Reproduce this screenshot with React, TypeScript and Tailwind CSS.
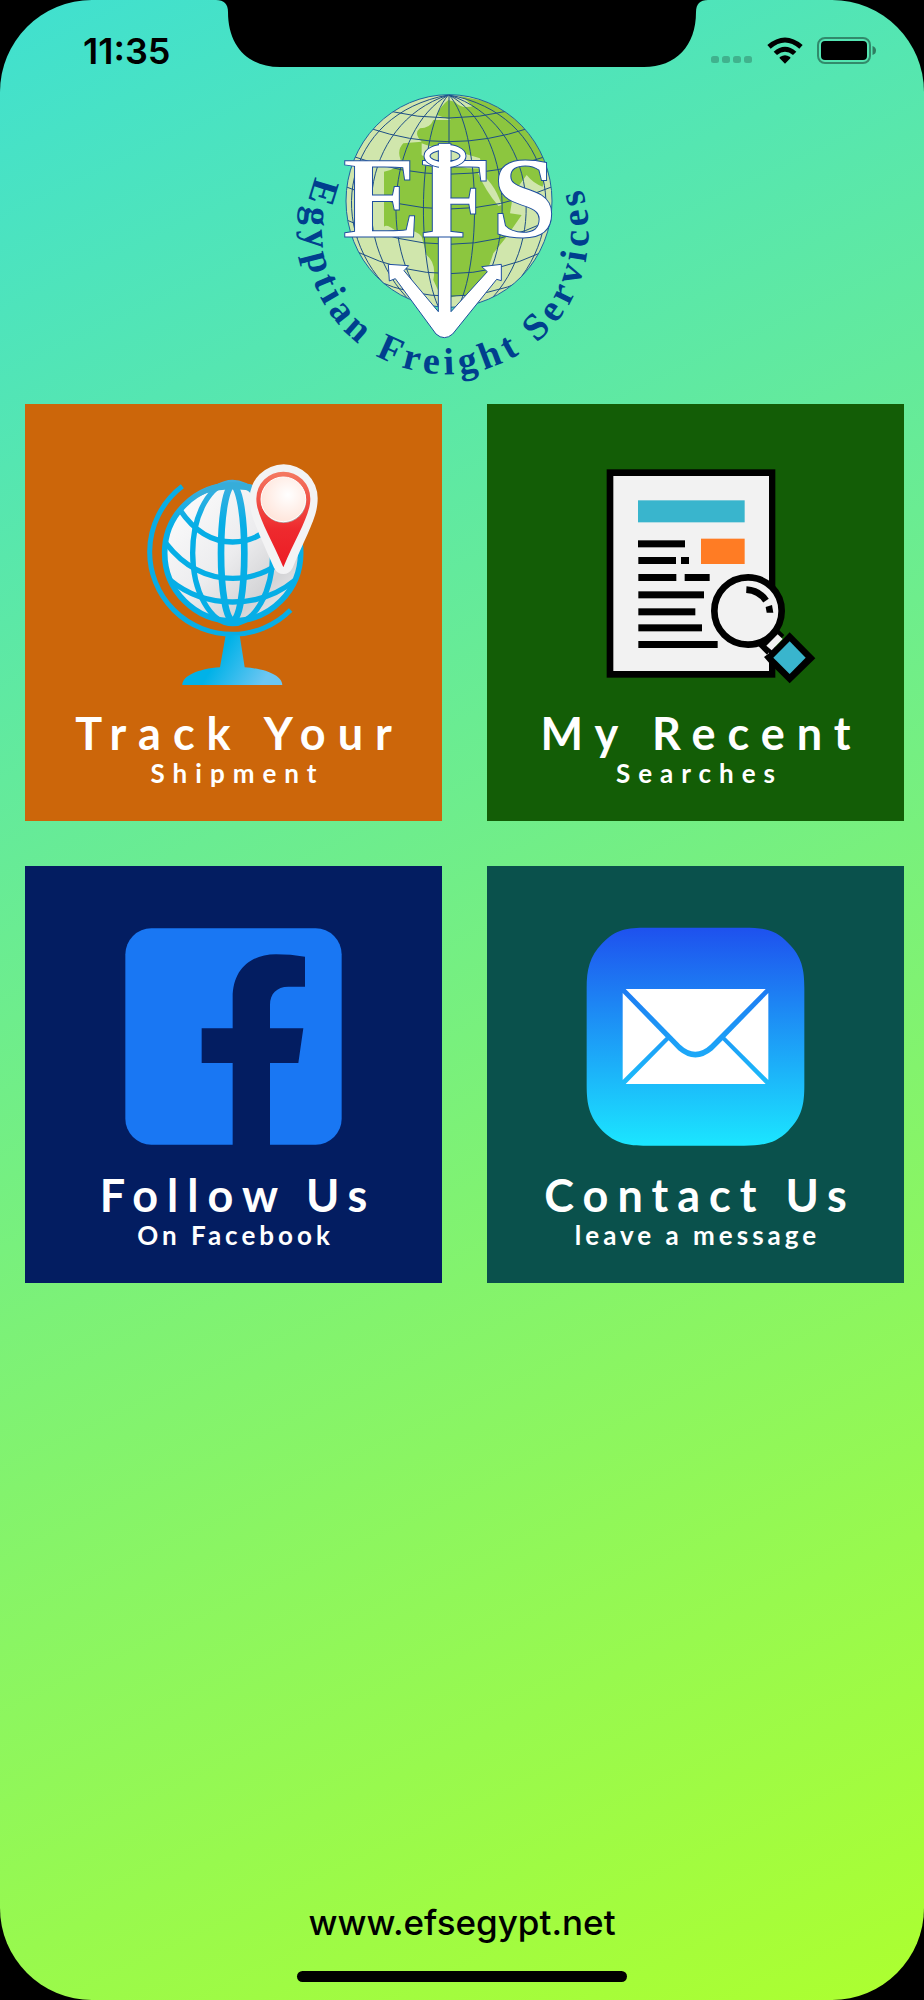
import React from "react";

function Notch() {
  return (
    <svg
      className="absolute top-0 left-1/2 h-[68px] w-[492px] -translate-x-1/2"
      viewBox="0 0 492 68"
      aria-hidden="true"
    >
      <path d="M0 0C8 0 12 4 12 12C12 46 32 67 64 67H428C460 67 480 46 480 12C480 4 484 0 492 0Z" fill="#000" />
    </svg>
  );
}

function StatusIcons() {
  return (
    <div className="flex items-end gap-[14px]">
      <svg className="h-[27px] w-[42px]" viewBox="0 0 42 27" aria-hidden="true">
        {[0, 11, 22, 33].map((x) => (
          <rect key={x} x={x} y="19" width="8" height="7" rx="2.5" fill="#000" opacity="0.22" />
        ))}
      </svg>
      <svg className="h-[27px] w-[36px]" viewBox="0 0 108 81" aria-hidden="true">
        <path d="M54 80L38 64Q36 61 40 59Q54 50 68 59Q72 61 70 64Z" />
        <path d="M20 44Q54 15 88 44L78 54Q54 34 30 54Z" />
        <path d="M1 24Q54 -21 107 24L97 35Q54 -2 11 35Z" />
      </svg>
      <svg className="h-[27px] w-[60px]" viewBox="0 0 60 27" aria-hidden="true">
        <rect x="1" y="1" width="52" height="25" rx="7" fill="none" stroke="#000" strokeOpacity="0.4" strokeWidth="2" />
        <rect x="4" y="4" width="46" height="19" rx="4" />
        <path d="M55.500 9Q59 10 59 13.500Q59 17 55.500 18Z" opacity="0.45" />
      </svg>
    </div>
  );
}

function Logo() {
  return (
    <svg className="w-[320px]" viewBox="0 0 960 930" role="img" aria-label="Egyptian Freight Services">
      <defs>
        <clipPath id="earth">
          <ellipse cx="507" cy="363" rx="309" ry="319" />
        </clipPath>
        <path id="ring" d="M108 290A426 426 0 0 0 500 883A426 426 0 0 0 892 290" />
      </defs>
      <ellipse cx="507" cy="363" rx="309" ry="319" fill="#d0e6ac" />
      <g clipPath="url(#earth)">
        <path
          d="M505 60Q540 70 575 80Q560 50 520 44L700 80L810 200L817 290Q800 250 788 320Q760 310 740 285L700 340L690 400L725 405L680 470L640 520L620 580L575 650Q520 640 490 665L460 600Q470 550 440 525L425 470Q400 440 350 455Q320 430 312 440V275Q350 270 362 240Q350 210 370 190L425 185Q400 160 420 145Q450 145 460 120H514Q490 112 470 105Q480 80 505 60Z"
          fill="#8cc63f"
        />
        <path d="M425 190Q460 205 500 205L600 235L605 265Q540 270 520 245Q470 260 425 225Z" fill="#d0e6ac" />
        <path d="M592 275Q640 300 665 375L655 378Q615 330 592 275Z" fill="#d0e6ac" />
        <path d="M500 45Q560 60 578 78Q545 88 525 66Z" fill="#d0e6ac" />
        <g fill="none" stroke="#1d4e86" strokeWidth="3">
          <path d="M507 44V690" />
          <path d="M505 45C410 150 410 560 480 690" />
          <path d="M505 45C320 150 290 530 460 690" />
          <path d="M505 45C240 130 190 500 420 690" />
          <path d="M505 45C190 100 120 450 350 650" />
          <path d="M507 45C605 150 605 560 530 690" />
          <path d="M507 45C700 150 720 530 555 690" />
          <path d="M507 45C770 130 820 500 600 690" />
          <path d="M507 45C820 100 890 450 670 650" />
          <path d="M320 92Q507 136 690 92" />
          <path d="M270 145Q507 225 745 145" />
          <path d="M222 230Q507 335 795 230" />
          <path d="M197 320Q507 454 817 320" />
          <path d="M200 420Q507 566 812 420" />
          <path d="M230 515Q507 647 790 515" />
          <path d="M285 600Q507 697 740 600" />
        </g>
      </g>
      <ellipse cx="507" cy="363" rx="309" ry="319" fill="none" stroke="#1d64a0" strokeWidth="3" />
      <path
        d="M475 190H513V695L622 575L605 560L664 553V602L650 598L518 762Q493 784 468 762L346 596L328 603L325 553L386 557L372 572L475 695Z"
        fill="#fff"
        stroke="#1d4e9e"
        strokeWidth="3"
      />
      <text
        x="188"
        y="472"
        fontSize="350"
        fill="#fff"
        stroke="#1d4e9e"
        strokeWidth="3"
        className="font-['Liberation_Serif',serif] font-bold"
      >
        EFS
      </text>
      <ellipse cx="495" cy="228" rx="54" ry="26" fill="none" stroke="#1d4e9e" strokeWidth="21" />
      <ellipse cx="495" cy="228" rx="54" ry="26" fill="none" stroke="#fff" strokeWidth="15" />
      <path d="M477 192H511V466H477Z" fill="#fff" />
      <text
        fontSize="114"
        fill="#003f8e"
        className="font-['Liberation_Serif',serif] font-bold tracking-[16px]"
      >
        <textPath href="#ring">Egyptian Freight Services</textPath>
      </text>
    </svg>
  );
}

function GlobeIcon() {
  return (
    <svg className="w-full" viewBox="15 12 1251 909" aria-hidden="true">
      <defs>
        <linearGradient id="globeBody" x1="0" y1="0" x2="1" y2="1">
          <stop offset="0" stopColor="#fff" />
          <stop offset="0.500" stopColor="#ececee" />
          <stop offset="0.750" stopColor="#d4d4d6" />
          <stop offset="1" stopColor="#f6f6f6" />
        </linearGradient>
        <linearGradient id="globeEdge" x1="0" y1="247" x2="0" y2="670" gradientUnits="userSpaceOnUse">
          <stop offset="0" stopColor="#3fafdf" />
          <stop offset="0.300" stopColor="#06aee6" />
          <stop offset="1" stopColor="#06aee6" />
        </linearGradient>
        <linearGradient id="globeStand" x1="0" y1="0" x2="1" y2="0.300">
          <stop offset="0.450" stopColor="#00b2e8" />
          <stop offset="1" stopColor="#6cc6f2" />
        </linearGradient>
        <linearGradient id="pinRed" x1="0" y1="0" x2="0" y2="1">
          <stop offset="0" stopColor="#f47a62" />
          <stop offset="0.600" stopColor="#ee2a2e" />
          <stop offset="1" stopColor="#ec1c24" />
        </linearGradient>
        <radialGradient id="pinFace" cx="0.600" cy="0.400" r="0.600">
          <stop offset="0" stopColor="#fff" />
          <stop offset="1" stopColor="#ffe6dc" />
        </radialGradient>
      </defs>
      <circle cx="638" cy="459" r="205" fill="url(#globeBody)" />
      <g fill="none" stroke="url(#globeEdge)">
        <ellipse cx="638" cy="459" rx="35" ry="203" strokeWidth="20" />
        <ellipse cx="638" cy="459" rx="120" ry="212" strokeWidth="16" />
        <path d="M480 330Q545 426 638 426Q731 426 796 330" strokeWidth="16" />
        <path d="M438 430Q520 535 638 535Q756 535 838 430" strokeWidth="16" />
        <path d="M450 540Q530 606 638 606Q746 606 826 540" strokeWidth="16" />
        <circle cx="638" cy="459" r="204" strokeWidth="17" />
      </g>
      <path d="M500 310Q555 247 638 247Q720 247 776 310Q710 266 638 268Q566 266 500 310Z" fill="#36add9" />
      <path
        d="M487 259A248 248 0 0 0 389 455A248 248 0 0 0 637 703A248 248 0 0 0 812 630"
        fill="none"
        stroke="#08ade5"
        strokeWidth="15"
      />
      <path d="M617 706H659L674 802C740 806 787 828 787 855H487C487 828 535 806 600 802Z" fill="url(#globeStand)" />
      <path
        d="M689 295A101 101 0 0 1 893 295C893 345 872 380 818 503Q808 522 790 522Q772 522 762 503C708 380 689 345 689 295Z"
        fill="#f3f3f4"
      />
      <path d="M709 296A80 80 0 0 1 871 296C871 346 830 406 790 502C750 406 709 346 709 296Z" fill="url(#pinRed)" />
      <circle cx="791" cy="301" r="68" fill="#b9aaa8" />
      <circle cx="790" cy="298" r="67" fill="url(#pinFace)" stroke="#fff" strokeWidth="3" />
    </svg>
  );
}

function DocumentIcon() {
  const lines = [
    [473, 421, 141],
    [474, 471, 113],
    [602, 471, 24],
    [474, 522, 114],
    [613, 522, 75],
    [474, 574, 197],
    [474, 625, 171],
    [474, 673, 191],
    [474, 723, 238],
  ];
  return (
    <svg className="w-full" viewBox="20 12 1251 909" aria-hidden="true">
      <rect x="379" y="208" width="506" height="625" />
      <rect x="399" y="228" width="467" height="585" fill="#f2f2f2" />
      <rect x="473" y="301" width="320" height="66" fill="#39b5cd" />
      <rect x="662" y="416" width="131" height="76" fill="#ff7c24" />
      {lines.map(([x, y, w]) => (
        <rect key={`${x}-${y}`} x={x} y={y} width={w} height="21" />
      ))}
      <path d="M834 738L890 684L912 705L860 764Z" />
      <path d="M858 737L892 703L907 717L874 751Z" fill="#f2f2f2" />
      <path d="M928 697L1005 775L928 850L866 788L851 771L872 755Z" />
      <path d="M928 724L976 773L928 822L879 773Z" fill="#39b5cd" />
      <circle cx="803" cy="633" r="101" fill="#f2f2f2" stroke="#000" strokeWidth="20" />
      <path d="M798 569Q836 571 857 602" fill="none" stroke="#000" strokeWidth="20" />
      <path d="M856 621L875 615L879 638H859Z" />
    </svg>
  );
}

function FacebookIcon() {
  return (
    <svg className="w-full" viewBox="15 18 1251 909" aria-hidden="true">
      <rect x="316" y="205" width="649" height="649" rx="78" fill="#1977f3" />
      <path
        d="M638 855V609H545V505H638V412C638 330 690 283 768 283Q812 283 855 290V380H805C770 380 750 402 750 434V505H850L835 609H750V855Z"
        fill="#031d61"
      />
    </svg>
  );
}

function MailIcon() {
  return (
    <svg className="w-full" viewBox="20 18 1251 909" aria-hidden="true">
      <defs>
        <linearGradient id="mailSky" x1="0" y1="203" x2="0" y2="857" gradientUnits="userSpaceOnUse">
          <stop offset="0" stopColor="#1e51ee" />
          <stop offset="1" stopColor="#1be6ff" />
        </linearGradient>
      </defs>
      <path
        d="M500 203H791C850 203 888 208 924 250C965 290 972 330 972 385V675C972 735 965 770 924 812C885 850 850 857 791 857H500C440 857 405 850 366 812C327 770 319 735 319 675V385C319 330 327 290 366 250C405 208 440 203 500 203Z"
        fill="url(#mailSky)"
      />
      <path d="M436 387H856L690 554Q645 596 600 554Z" fill="#fff" />
      <path d="M427 399L556 532L427 660Z" fill="#fff" />
      <path d="M864 399L735 532L864 660Z" fill="#fff" />
      <path d="M436 672L565 541L594 571Q645 614 697 571L727 541L856 672Z" fill="#fff" />
    </svg>
  );
}

const tiles = [
  {
    title: "Track Your",
    subtitle: "Shipment",
    Icon: GlobeIcon,
    color: "bg-[#cc660a]",
    titleClass: "pl-[12px] tracking-[12px]",
    subtitleClass: "pl-[8px] tracking-[8px]",
  },
  {
    title: "My Recent",
    subtitle: "Searches",
    Icon: DocumentIcon,
    color: "bg-[#135d06]",
    titleClass: "pl-[12px] tracking-[12px]",
    subtitleClass: "pl-[8px] tracking-[8px]",
  },
  {
    title: "Follow Us",
    subtitle: "On Facebook",
    Icon: FacebookIcon,
    color: "bg-[#031d61]",
    titleClass: "pl-[9px] tracking-[9px]",
    subtitleClass: "pl-[4px] tracking-[4px]",
  },
  {
    title: "Contact Us",
    subtitle: "leave a message",
    Icon: MailIcon,
    color: "bg-[#0a514c]",
    titleClass: "pl-[9px] tracking-[9px]",
    subtitleClass: "pl-[4px] tracking-[4px]",
  },
];

export default function App() {
  return (
    <div className="min-h-screen bg-black font-[Inter,sans-serif] text-black">
      <div className="relative flex min-h-screen flex-col rounded-[92px] bg-[linear-gradient(155deg,#40e0d0,#adff2f)]">
        <Notch />
        <header className="flex h-20 items-start justify-between pt-[30px] pr-[47px] pl-[83px]">
          <time className="text-[36px] leading-[42px] font-semibold">11:35</time>
          <div className="pt-[7px]">
            <StatusIcons />
          </div>
        </header>
        <main className="flex flex-1 flex-col">
          <div className="flex justify-center pr-11">
            <Logo />
          </div>
          <nav className="mt-[14px] grid grid-cols-2 gap-[45px] pr-5 pl-[25px]">
            {tiles.map(({ title, subtitle, Icon, color, titleClass, subtitleClass }) => (
              <button
                key={title}
                type="button"
                className={`flex aspect-square cursor-pointer flex-col items-center justify-start font-[Lato,sans-serif] font-bold whitespace-nowrap text-white ${color}`}
              >
                <Icon />
                <span className={`mt-0.5 text-[45px] leading-[48px] ${titleClass}`}>{title}</span>
                <span className={`text-[26px] leading-8 ${subtitleClass}`}>{subtitle}</span>
              </button>
            ))}
          </nav>
        </main>
        <footer className="flex flex-col items-center gap-[27px] pb-[18px]">
          <a href="https://www.efsegypt.net" className="text-[35px] leading-[44px] font-medium">
            www.efsegypt.net
          </a>
          <div className="h-[11px] w-[330px] rounded-full bg-black" />
        </footer>
      </div>
    </div>
  );
}
